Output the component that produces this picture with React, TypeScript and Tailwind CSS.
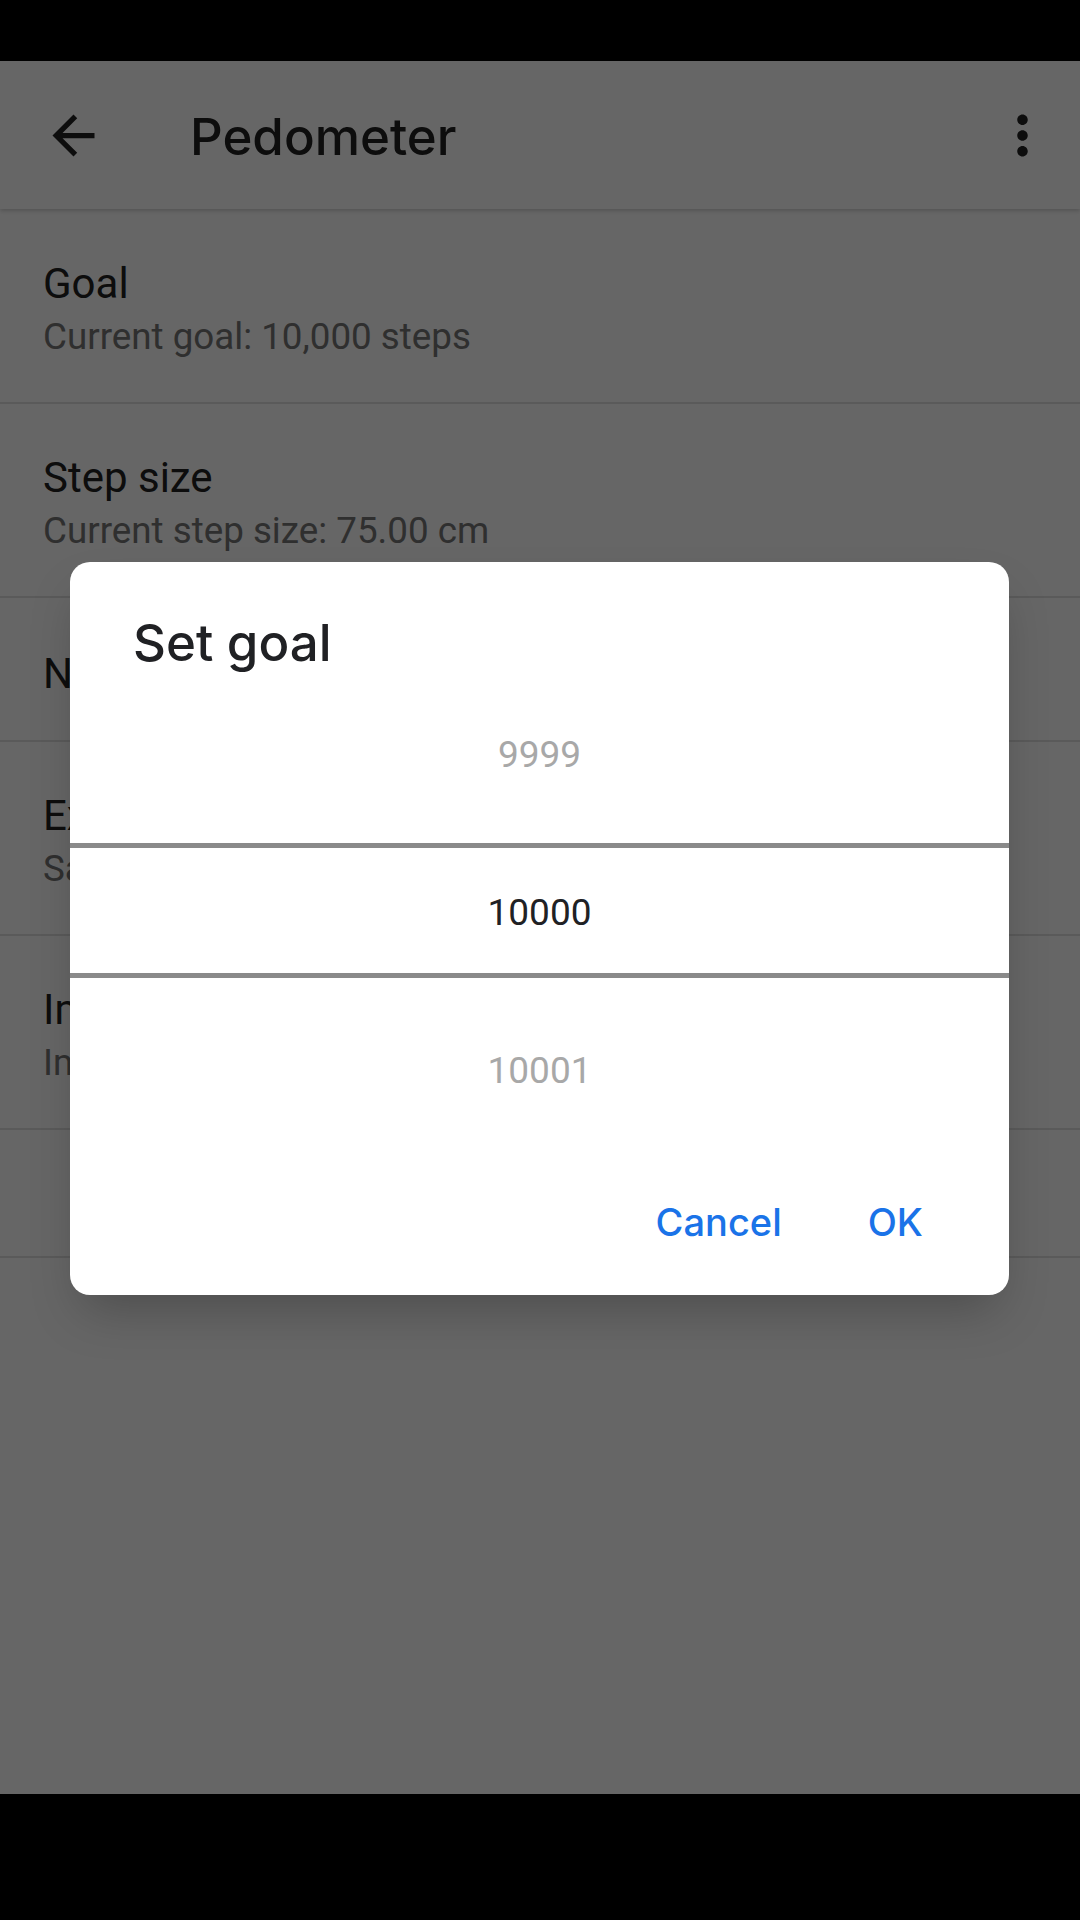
import React from 'react';

type Pref = {
    title?: string;
    summary?: string;
};

const prefs: Pref[] = [
    { title: 'Goal', summary: 'Current goal: 10,000 steps' },
    { title: 'Step size', summary: 'Current step size: 75.00 cm' },
    { title: 'Notification' },
    { title: 'Export data', summary: 'Save your step history to a file' },
    { title: 'Import data', summary: 'Import step history from a file' },
    {},
];

function PrefRow({ pref }: { pref: Pref }) {
    // two-line rows are taller; the last row has no visible text
    if (!pref.title) {
        return <div className="h-[128px] border-b-2 border-[#e0e0e0]" />;
    }
    if (!pref.summary) {
        return (
            <div className="pl-[43px] pt-[48px] pb-[38px] border-b-2 border-[#e0e0e0]">
                <div className="text-[42px] leading-[56px] text-[#212121]">{pref.title}</div>
            </div>
        );
    }
    return (
        <div className="pl-[43px] pt-[46px] pb-[42px] border-b-2 border-[#e0e0e0]">
            <div className="text-[42px] leading-[56px] text-[#212121]">{pref.title}</div>
            <div className="mt-[2px] text-[36.75px] leading-[46px] text-[#757575]">{pref.summary}</div>
        </div>
    );
}

function GoalDialog() {
    return (
        <div className="absolute top-[562px] left-[70px] w-[939px] bg-white rounded-[20px] shadow-2xl flex flex-col overflow-hidden">
            <div
                className="pt-[49px] pl-[63px] text-[51px] leading-[64px] font-medium text-[#202124]"
                style={{ fontFamily: 'Inter, Roboto, sans-serif' }}
            >
                Set goal
            </div>

            {/* number picker */}
            <div className="flex flex-col text-[37px]">
                <div className="h-[168px] pt-[1px] pb-[10px] flex items-center justify-center text-[#a8a8a8]">9999</div>
                <div className="h-[5px] bg-[#8a8a8a]" />
                <div className="h-[125px] pt-[5px] flex items-center justify-center text-[#202124]">10000</div>
                <div className="h-[5px] bg-[#8a8a8a]" />
                <div className="h-[184px] pt-[1px] flex items-center justify-center text-[#a8a8a8]">10001</div>
            </div>

            <div
                className="pt-[24px] pb-[37px] pr-[86px] flex justify-end gap-[86px] text-[38px] font-medium text-[#1a73e8]"
                style={{ fontFamily: 'Inter, Roboto, sans-serif' }}
            >
                <button className="h-[72px] flex items-center">Cancel</button>
                <button className="h-[72px] flex items-center">OK</button>
            </div>
        </div>
    );
}

export default function App() {
    return (
        <div
            className="relative w-[1080px] h-[1920px] overflow-hidden bg-white flex flex-col"
            style={{ fontFamily: 'Roboto, "Liberation Sans", sans-serif' }}
        >
            {/* Status bar */}
            <div className="h-[61px] bg-black shrink-0" />

            {/* Toolbar */}
            <div className="relative z-10 h-[148px] shrink-0 bg-white flex items-center shadow-[0_2px_4px_rgba(0,0,0,0.18)]">
                <svg viewBox="0 0 24 24" className="ml-[42px] w-[63px] h-[63px]" fill="#212121">
                    <path d="M20 11H7.83l5.59-5.59L12 4l-8 8 8 8 1.41-1.41L7.83 13H20v-2z" />
                </svg>
                <div
                    className="ml-[85px] pt-[5px] text-[51px] font-medium text-[#212121]"
                    style={{ fontFamily: 'Inter, Roboto, sans-serif' }}
                >
                    Pedometer
                </div>
                <svg viewBox="0 0 24 24" className="ml-auto mr-[26px] w-[63px] h-[63px]" fill="#212121">
                    <path d="M12 8c1.1 0 2-.9 2-2s-.9-2-2-2-2 .9-2 2 .9 2 2 2zm0 2c-1.1 0-2 .9-2 2s.9 2 2 2 2-.9 2-2-.9-2-2-2zm0 6c-1.1 0-2 .9-2 2s.9 2 2 2 2-.9 2-2-.9-2-2-2z" />
                </svg>
            </div>

            {/* Preference list */}
            <div className="flex-1 flex flex-col pt-[1px]">
                {prefs.map((p, i) => (
                    <PrefRow key={i} pref={p} />
                ))}
            </div>

            {/* Nav bar */}
            <div className="h-[126px] bg-black shrink-0" />

            {/* Scrim */}
            <div className="absolute inset-0 z-20 bg-black/60" />

            <div className="absolute inset-0 z-30">
                <GoalDialog />
            </div>
        </div>
    );
}
